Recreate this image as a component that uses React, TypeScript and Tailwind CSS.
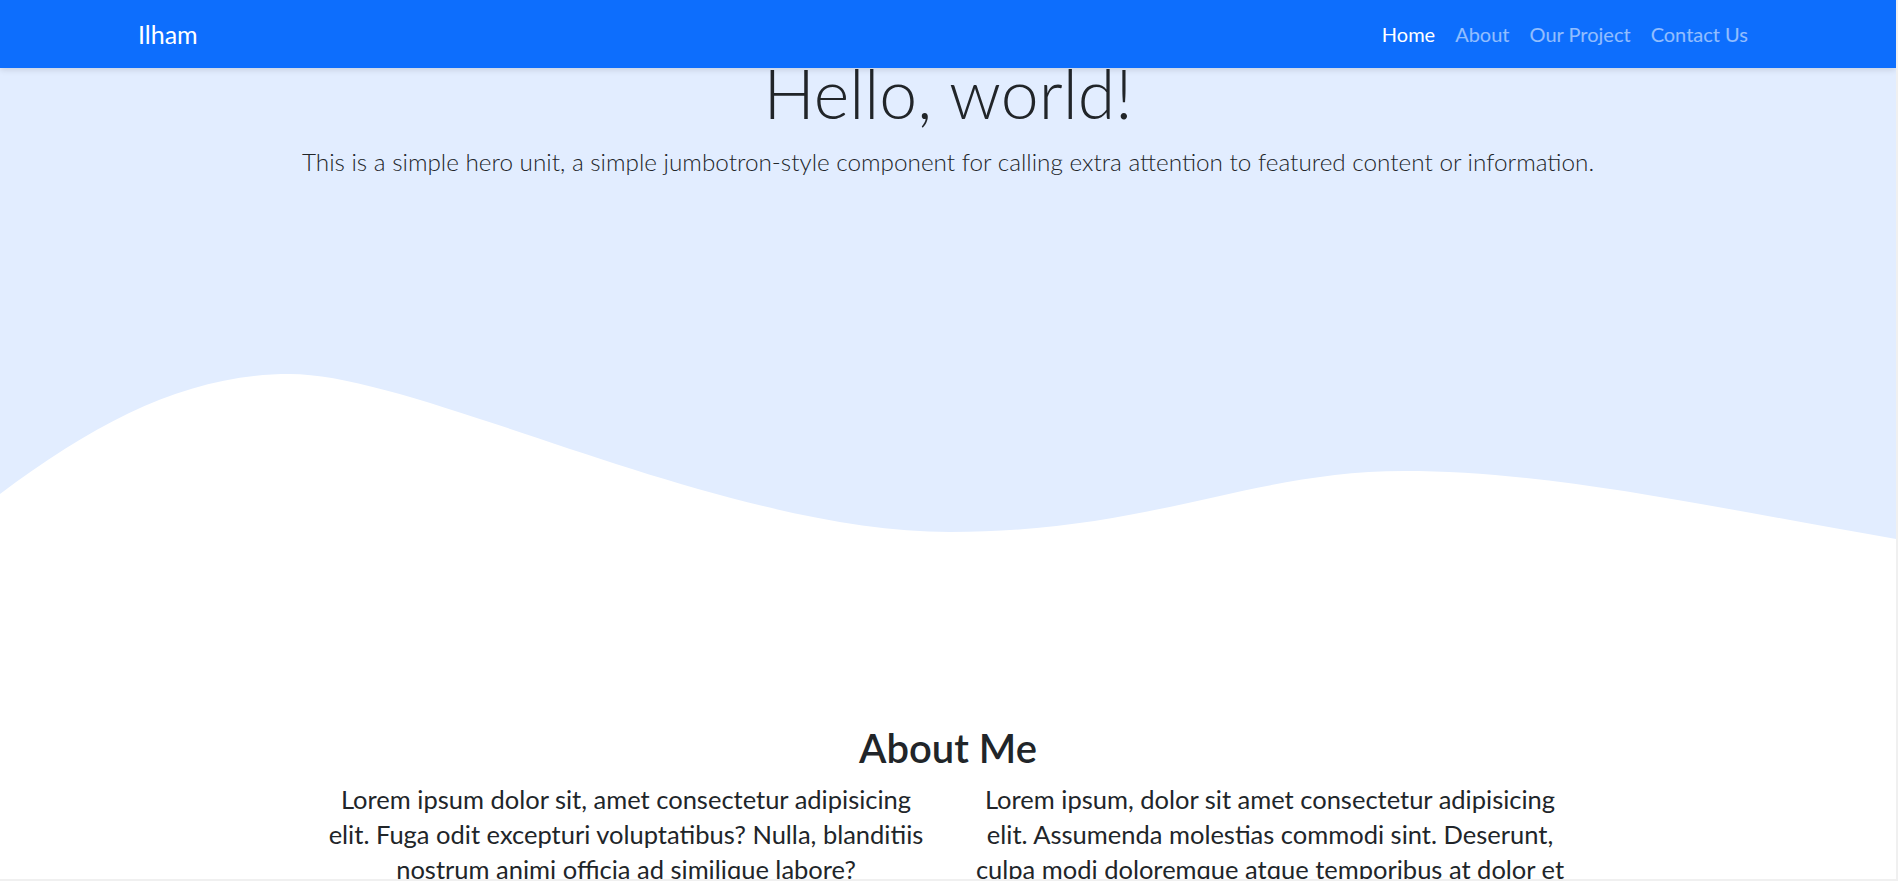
import React from 'react';

const navLinks = [
  { label: 'Home', active: true },
  { label: 'About', active: false },
  { label: 'Our Project', active: false },
  { label: 'Contact Us', active: false },
];

const Wave: React.FC = () => (
  <svg className="block w-full h-[260px]" viewBox="0 0 1896 260" preserveAspectRatio="none">
    <path
      fill="#e2edff"
      d="M0,155 C100,80 190,35 290,35 C420,35 720,193 950,193 C1150,193 1250,132 1404,132 C1550,132 1700,166 1896,200 L1896,0 L0,0 Z"
    />
  </svg>
);

const App: React.FC = () => {
  return (
    <div className="h-[881px] w-full overflow-hidden bg-[#f0f0f0] font-['Lato','Open_Sans',sans-serif] text-[#212529]">
      <div className="h-[879px] w-[1896px] overflow-hidden bg-white relative">
        <nav className="absolute top-0 left-0 right-0 z-10 h-[68px] bg-[#0d6efd] shadow-[0_2px_6px_rgba(0,0,0,0.12)]">
          <div className="w-[1650px] h-full mx-auto px-[15px] flex items-center justify-between">
            <a className="text-white text-[25px] leading-none">Ilham</a>
            <ul className="flex items-center">
              {navLinks.map(l => (
                <li key={l.label}>
                  <a className={`px-[10px] text-[20px] ${l.active ? 'text-white' : 'text-white/55'}`}>{l.label}</a>
                </li>
              ))}
            </ul>
          </div>
        </nav>

        <section className="bg-[#e2edff] pt-[52px] text-center">
          <h1 className="text-[68px] font-light leading-[1.2]">Hello, world!</h1>
          <p className="mt-[10px] text-[24.3px] font-light leading-[1.5]">
            This is a simple hero unit, a simple jumbotron-style component for calling extra attention to featured content or information.
          </p>
          <div className="h-[159px]"></div>
        </section>
        <Wave />

        <section className="pt-[125px] text-center">
          <h2 className="text-[40px] font-semibold leading-[1.2]">About Me</h2>
          <div className="flex justify-center mt-[10px]">
            <div className="w-[644px] px-[12px]">
              <p className="text-[25.5px] leading-[35px]">
                Lorem ipsum dolor sit, amet consectetur adipisicing<br />
                elit. Fuga odit excepturi voluptatibus? Nulla, blanditiis<br />
                nostrum animi officia ad similique labore?<br />
                Quos, eveniet voluptas dolorum consequatur.
              </p>
            </div>
            <div className="w-[644px] px-[12px]">
              <p className="text-[25.5px] leading-[35px]">
                Lorem ipsum, dolor sit amet consectetur adipisicing<br />
                elit. Assumenda molestias commodi sint. Deserunt,<br />
                culpa modi doloremque atque temporibus at dolor et<br />
                quisquam rerum.
              </p>
            </div>
          </div>
        </section>
      </div>
    </div>
  );
};

export default App;
